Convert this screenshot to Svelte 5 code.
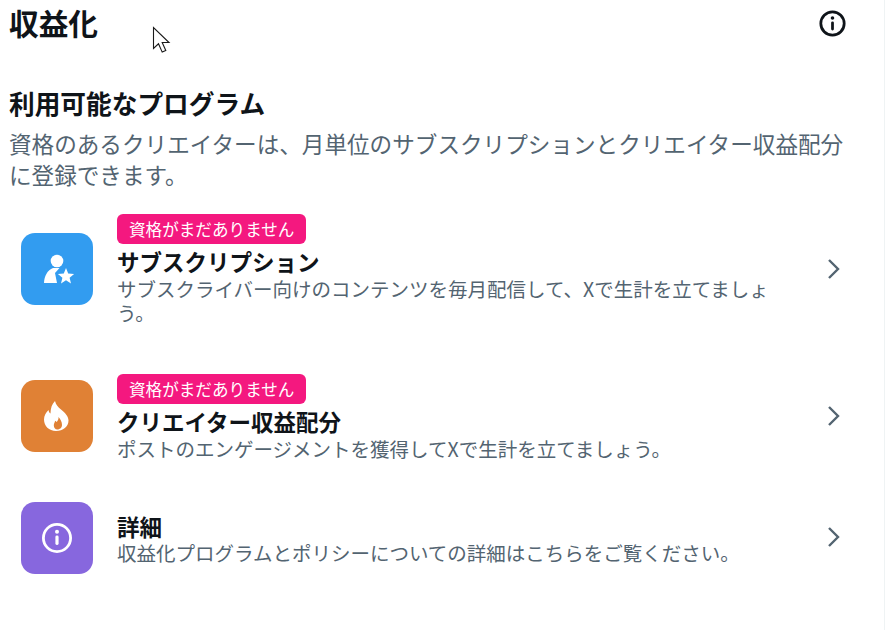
<script lang="ts">
  const items = [
    {
      title: 'サブスクリプション',
      desc: 'サブスクライバー向けのコンテンツを毎月配信して、Xで生計を立てましょう。',
      badge: true,
      color: 'blue'
    },
    {
      title: 'クリエイター収益配分',
      desc: 'ポストのエンゲージメントを獲得してXで生計を立てましょう。',
      badge: true,
      color: 'orange'
    },
    {
      title: '詳細',
      desc: '収益化プログラムとポリシーについての詳細はこちらをご覧ください。',
      badge: false,
      color: 'purple'
    }
  ];
</script>

<div class="page">
  <header class="top">
    <h1>収益化</h1>
    <svg class="info" viewBox="0 0 24 24" width="33" height="33" fill="#0f1419" aria-label="情報">
      <path fill-rule="evenodd" d="M12 2.500a9.500 9.500 0 1 0 0 19 9.500 9.500 0 0 0 0-19zM4.500 12a7.500 7.500 0 1 1 15 0 7.500 7.500 0 0 1-15 0z" />
      <rect x="11" y="10.500" width="2" height="6.500" rx="1" />
      <circle cx="12" cy="8" r="1.300" />
    </svg>
  </header>

  <section class="intro">
    <h2>利用可能なプログラム</h2>
    <p>資格のあるクリエイターは、月単位のサブスクリプションとクリエイター収益配分に登録できます。</p>
  </section>

  <div class="list">
    {#each items as item}
      <div class="row {item.color}">
        <div class="tile">
          {#if item.color === 'blue'}
            <svg viewBox="0 0 36 36" width="36" height="36" fill="#fff">
              <circle cx="18" cy="10" r="6.300" />
              <path d="M5 32c.3-7 3.500-13 9-15l6.500 0-4.500 5 2 10z" />
              <path d="M27 17 29.200 22.400 35.100 22.900 30.600 26.700 32 32.400 27 29.300 22 32.400 23.400 26.700 18.900 22.900 24.800 22.400z" />
            </svg>
          {:else if item.color === 'orange'}
            <svg viewBox="0 0 36 36" width="36" height="36" fill="#fff">
              <path fill-rule="evenodd" d="M16 3c1 4 3 6 6 8.500 4 3.500 7.500 6.500 7.500 11 0 6-5.500 10.500-12.500 10.500S5 28 5 21.500c0-4 2-7 4.500-9.500.3 2 1 3 2 3.500C11.500 10 13 6 16 3zM19.500 19c.3 2.500-1 4-2 5-.4-.6-.8-1-1.500-1.300.2 1-1.200 2.800-1.200 4.500 0 2.500 1.400 4.300 3.500 4.300s4.700-1.500 4.700-4.500c0-3-1.500-5.800-3.500-8z" />
            </svg>
          {:else}
            <svg viewBox="0 0 36 36" width="36" height="36" fill="#fff">
              <path fill-rule="evenodd" d="M18 3a15 15 0 1 0 0 30 15 15 0 0 0 0-30zM5.800 18a12.200 12.200 0 1 1 24.400 0 12.200 12.200 0 0 1-24.400 0z" />
              <rect x="16.400" y="15.500" width="3.200" height="9.500" rx="1.400" />
              <circle cx="18" cy="11.800" r="2" />
            </svg>
          {/if}
        </div>
        <div class="text">
          {#if item.badge}
            <span class="badge">資格がまだありません</span>
          {/if}
          <h3>{item.title}</h3>
          <p>{item.desc}</p>
        </div>
        <svg class="chev" viewBox="0 0 14 24" width="14" height="24" fill="none" stroke="#536471" stroke-width="2.400">
          <path d="M2 3 11 12 2 21" />
        </svg>
      </div>
    {/each}
  </div>

  <svg class="cursor" viewBox="0 0 20 30" width="20" height="30">
    <path d="M1.500 1.500v21l5-4.700 3.700 8.300 3.600-1.600-3.600-8h6.800z" fill="#fff" stroke="#1a1a1a" stroke-width="1.100" />
  </svg>
</div>

<style>
  :global(body) {
    margin: 0;
    background: #fff;
  }

  .page {
    position: relative;
    box-sizing: border-box;
    width: 885px;
    height: 630px;
    border-right: 1px solid #eff3f4;
    font-family: "Noto Sans CJK JP", "Noto Sans", sans-serif;
    color: #0f1419;
    overflow: hidden;
  }

  .top {
    display: flex;
    align-items: center;
    justify-content: space-between;
    height: 48px;
    padding: 0 35px 0 9px;
  }

  h1 {
    margin: 0 0 3px;
    font-size: 29.700px;
    font-weight: 700;
    line-height: 44px;
  }

  .info {
    margin-bottom: 1px;
  }

  .intro {
    padding: 35px 40px 0 9px;
  }

  h2 {
    margin: 0 0 4.500px;
    font-size: 25.700px;
    font-weight: 700;
    line-height: 40px;
  }

  .intro p {
    margin: 0;
    font-size: 22.600px;
    line-height: 31px;
    color: #536471;
  }

  .list {
    display: flex;
    flex-direction: column;
    padding-top: 24.500px;
  }

  .row {
    display: flex;
    align-items: center;
    gap: 24px;
    padding: 0 43px 0 21px;
  }

  .row.blue {
    height: 111px;
    margin-bottom: 48px;
  }

  .row.orange {
    height: 88px;
    margin-bottom: 41px;
  }

  .row.purple {
    height: 72px;
  }

  .tile {
    flex: none;
    width: 72px;
    height: 72px;
    border-radius: 14px;
    display: flex;
    align-items: center;
    justify-content: center;
  }

  .blue .tile,
  .orange .tile {
    margin-bottom: 2px;
  }

  .blue .tile {
    background: #329cf0;
  }

  .orange .tile {
    background: #e08135;
  }

  .purple .tile {
    background: #8767de;
  }

  .text {
    flex: 1;
    min-width: 0;
    padding-right: 29px;
  }

  .purple .text {
    margin-bottom: 3px;
  }

  .badge {
    display: block;
    width: fit-content;
    box-sizing: border-box;
    height: 30px;
    padding: 0 12px;
    border-radius: 6px;
    background: #f4187f;
    color: #fff;
    font-size: 16.600px;
    line-height: 30px;
  }

  h3 {
    margin: 2px 0 1px;
    font-size: 22.500px;
    font-weight: 700;
    line-height: 30px;
  }

  .purple h3 {
    margin-bottom: 0;
  }

  .text p {
    margin: 0;
    font-size: 19.500px;
    line-height: 24px;
    color: #536471;
  }

  .chev {
    flex: none;
    margin-bottom: 2px;
  }

  .cursor {
    position: absolute;
    left: 152px;
    top: 26px;
  }
</style>
